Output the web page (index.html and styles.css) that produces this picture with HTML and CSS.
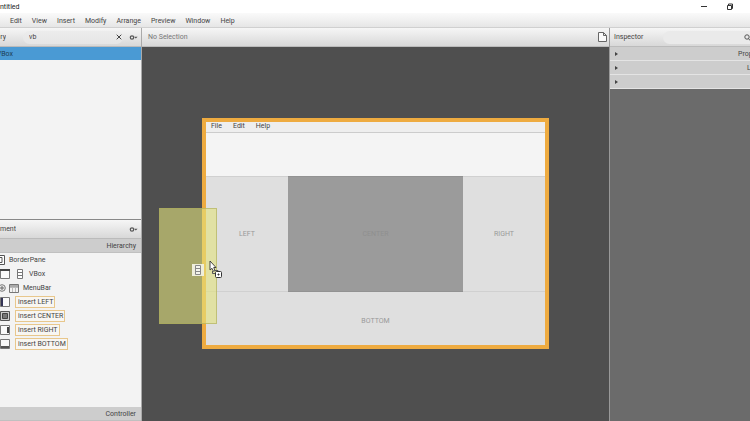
FILE: index.html
```html
<!DOCTYPE html>
<html lang="en">
<head>
<meta charset="utf-8">
<title>Untitled</title>
<link rel="stylesheet" href="styles.css">
</head>
<body>
<div class="app">
  <header class="titlebar">
    <span class="edge-text">ntitled</span>
    <button class="icon-btn minimize" aria-label="Minimize"><svg width="8" height="8" viewBox="0 0 8 8"><path d="M1 3.500h6" stroke="#333" fill="none"/></svg></button>
    <button class="icon-btn" aria-label="Restore"><svg width="8" height="8" viewBox="0 0 8 8"><path d="M1.500 2.500h4v4h-4zM2.500 2.500v-1.500h4v4.500h-1" stroke="#333" fill="none"/></svg></button>
  </header>
  <nav class="menubar">
    <button>Edit</button><button>View</button><button>Insert</button><button>Modify</button><button>Arrange</button><button>Preview</button><button>Window</button><button>Help</button>
  </nav>
  <main class="workspace">
    <aside class="left">
      <section class="library">
        <div class="bar">
          <label class="edge-text lib" for="search">ry</label>
          <div class="search">
            <input id="search" type="text" value="vb">
            <button class="icon-btn" aria-label="Clear"><svg width="6" height="6" viewBox="0 0 6 6"><path d="M.7.7l4.600 4.600M5.300.7L.7 5.300" stroke="#444" fill="none"/></svg></button>
          </div>
          <button class="icon-btn" aria-label="Library options"><svg width="9" height="7" viewBox="0 0 9 7"><circle cx="3" cy="3.500" r="1.700" stroke="#555" stroke-width="1.200" fill="none"/><path d="M5 2.800h3.600L6.800 4.600z" fill="#555"/></svg></button>
        </div>
        <div class="result"><span class="edge-text vbox">VBox</span></div>
      </section>
      <section class="document">
        <div class="bar doc-bar">
          <span class="edge-text">ment</span>
          <button class="icon-btn" aria-label="Document options"><svg width="9" height="7" viewBox="0 0 9 7"><circle cx="3" cy="3.500" r="1.700" stroke="#555" stroke-width="1.200" fill="none"/><path d="M5 2.800h3.600L6.800 4.600z" fill="#555"/></svg></button>
        </div>
        <button class="accordion">Hierarchy</button>
        <ul class="tree">
          <li class="root"><svg width="5" height="10" viewBox="0 0 5 10"><path d="M0 .5h4.500v9H0M0 2.500h2v5H0" fill="#fff" stroke="#555"/></svg>BorderPane</li>
          <li><svg width="10" height="10" viewBox="0 0 10 10"><path d="M.5.5h9v9h-9z" fill="#fafafa" stroke="#777"/><path d="M0 0h10v2H0z" fill="#444"/></svg><svg class="vb-icon" width="6" height="10" viewBox="0 0 6 10"><path d="M.5.5h5v9h-5zM1 3.500h4M1 6.500h4" fill="#fff" stroke="#777"/></svg>VBox</li>
          <li><svg class="plus" width="6" height="8" viewBox="0 0 6 8"><circle cx="2" cy="4" r="3.300" fill="#eee" stroke="#777"/><path d="M0 4h4M2 2v4" stroke="#666"/></svg><svg class="menu-icon" width="10" height="9" viewBox="0 0 10 9"><path d="M1 3.500h8M3.500 4v4M6.500 4v4" stroke="#bbb"/><path d="M.5.5h9v8h-9z" fill="none" stroke="#777"/><path d="M1 1h8v2H1z" fill="#aaa"/></svg>MenuBar</li>
          <li><svg width="10" height="10" viewBox="0 0 10 10"><path d="M.5.5h9v9h-9z" fill="#fafafa" stroke="#777"/><path d="M1 1h2v8H1z" fill="#335"/></svg><span class="slot">insert LEFT</span></li>
          <li><svg width="10" height="10" viewBox="0 0 10 10"><path d="M.5.5h9v9h-9z" fill="#ccc" stroke="#555"/><path d="M2.500 2.500h5v5h-5z" fill="#777" stroke="#444"/></svg><span class="slot">insert CENTER</span></li>
          <li><svg width="10" height="10" viewBox="0 0 10 10"><path d="M.5.5h9v9h-9z" fill="#fafafa" stroke="#777"/><path d="M7 2h2v6H7z" fill="#444"/></svg><span class="slot">insert RIGHT</span></li>
          <li><svg width="10" height="10" viewBox="0 0 10 10"><path d="M.5.5h9v9h-9z" fill="#fafafa" stroke="#777"/><path d="M1 7h8v2H1z" fill="#555"/></svg><span class="slot">insert BOTTOM</span></li>
        </ul>
        <button class="accordion">Controller</button>
      </section>
    </aside>
    <section class="center">
      <div class="bar selection"><span>No Selection</span>
        <svg width="9" height="10" viewBox="0 0 9 10"><path d="M.5.5h5l3 3v6h-8zM5.500.5v3h3" fill="#fafafa" stroke="#666"/></svg>
      </div>
      <div class="canvas">
        <div class="pane">
          <div class="pane-menu"><span>File</span><span>Edit</span><span>Help</span></div>
          <div class="pane-top"></div>
          <div class="pane-mid">
            <div class="zone">LEFT</div><div class="zone core">CENTER</div><div class="zone">RIGHT</div>
          </div>
          <div class="zone bottom">BOTTOM</div>
          <div class="ghost"></div>
          <div class="chip"><svg width="6" height="10" viewBox="0 0 6 10"><path d="M.5.5h5v9h-5zM1 3.500h4M1 6.500h4" fill="#f4f4ec" stroke="#888"/></svg></div>
          <svg class="cursor" width="15" height="20" viewBox="0 0 15 20"><path d="M1 1v9l2-1.700 1.500 3 1.500-.8L4.700 7.500H7z" fill="#fff" stroke="#333" stroke-width=".9"/><path d="M3.500 11v2.500h3.500M6 10.500h3v2" fill="none" stroke="#555"/><rect x="6.500" y="11.500" width="6" height="6" rx="1" fill="#fff" stroke="#333"/><path d="M8.500 14.500h2M9.500 13.500v2" stroke="#333"/></svg>
        </div>
      </div>
    </section>
    <aside class="right">
      <div class="bar inspector"><label for="filter">Inspector</label>
        <div class="filter"><input id="filter" type="text"><svg width="6" height="7" viewBox="0 0 6 7"><circle cx="3" cy="3" r="2.200" fill="none" stroke="#555"/><path d="M4.500 4.500l1.500 2" stroke="#555"/></svg></div>
      </div>
      <button class="fold"><span class="arrow"></span><span class="fold-name">Prop</span></button>
      <button class="fold"><span class="arrow"></span><span class="fold-name short">L</span></button>
      <button class="fold" aria-label="Section"><span class="arrow"></span></button>
    </aside>
  </main>
</div>
</body>
</html>
```
FILE: styles.css
```css
* { box-sizing: border-box; }
body {
  margin: 0;
  font: 7px/10px Roboto, "Open Sans", sans-serif;
  color: #444;
  overflow: hidden;
}
button, input { font: inherit; color: inherit; border: 0; padding: 0; background: none; }
svg { display: block; flex: none; }
.app { display: flex; flex-direction: column; height: 100vh; }
.titlebar { display: flex; align-items: center; gap: 18px; height: 13px; padding-right: 16px; background: #fff; color: #222; }
.edge-text { display: flex; justify-content: flex-end; overflow: hidden; white-space: nowrap; flex: none; }
.minimize { margin-left: auto; }
.menubar {
  display: flex; align-items: center; gap: 10px; height: 15px; padding: 1px 0 0 10px;
  background: linear-gradient(#fafafa, #e6e6e6); border-bottom: 1px solid #d0d0d0;
}
.workspace { display: grid; grid-template-columns: 142px 1fr 141px; flex: 1; min-height: 0; }
.left { display: flex; flex-direction: column; border-right: 1px solid #aaa; background: #f3f3f3; }
.bar {
  display: flex; align-items: center; height: 19px; flex: none;
  background: linear-gradient(#f6f6f6, #d8d8d8); border-bottom: 1px solid #bbb;
}
.left .bar { padding-right: 3px; gap: 6px; }
.lib { width: 6px; }
.search {
  display: flex; align-items: center; flex: 1; min-width: 0; height: 13px; margin-left: 11px;
  padding: 0 1px 0 6px; border-radius: 7px; background: linear-gradient(#ececec, #e6e6e6);
}
.search input { flex: 1; min-width: 0; }
.library { flex: none; height: 191px; }
.result { height: 13px; background: #4a9ad4; color: #1d3c55; display: flex; align-items: center; }
.vbox { width: 13px; }
.document { display: flex; flex-direction: column; flex: 1; min-height: 0; border-top: 1px solid #888; }
.doc-bar { justify-content: space-between; }
.accordion { height: 14px; flex: none; padding: 1px 5px 0 0; text-align: right; background: #cdcdcd; border-bottom: 1px solid #c0c0c0; }
.tree { flex: 1; margin: 0; padding: 0; list-style: none; }
.tree li { display: flex; align-items: center; height: 14px; }
.root svg { margin-right: 4px; }
.vb-icon { margin: 0 6px 0 7px; }
.plus { margin-right: 3px; }
.menu-icon { margin-right: 4px; }
.slot { margin-left: 5px; padding: 0 1px 0 2px; border: 1px solid #e8c78c; background: #f8f6f2; }
.center { display: flex; flex-direction: column; min-width: 0; }
.selection { justify-content: space-between; padding: 0 2px 0 6px; color: #777; }
.canvas { flex: 1; display: flex; align-items: center; padding: 0 60px 2px; background: #4f4f4f; }
.pane { position: relative; flex: 1; border: 4px solid #eeab40; background: #f4f4f4; }
.pane-menu { display: flex; align-items: center; gap: 11px; height: 11px; padding: 0 0 2px 5px; background: #eee; border-bottom: 1px solid #ccc; }
.pane-top { height: 43px; }
.pane-mid { display: grid; grid-template-columns: 82px 1fr 82px; height: 116px; }
.zone { display: flex; align-items: center; justify-content: center; background: #dfdfdf; border: 1px solid #d0d0d0; border-width: 1px 0; color: #999; }
.core { background: #9b9b9b; border-color: #929292; color: #8f8f8f; }
.bottom { height: 53px; padding-top: 5px; border: 0; }
.ghost { position: absolute; left: -47px; top: 86px; width: 58px; height: 116px; background: rgba(226, 226, 125, .6); border: 1px solid rgba(170, 170, 90, .6); }
.chip { position: absolute; left: -14px; top: 142px; padding: 1px 3px; background: #efeedb; }
.cursor { position: absolute; left: 3px; top: 138px; }
.right { background: #6b6b6b; border-left: 1px solid #999; overflow: hidden; }
.inspector { padding-left: 4px; }
.filter {
  display: flex; align-items: center; flex: 1; min-width: 0; height: 13px; margin-left: 20px;
  border-radius: 7px 0 0 7px; background: #eaeaea;
}
.filter input { flex: 1; min-width: 0; }
.fold { display: flex; align-items: center; width: 100%; height: 14px; padding-left: 5px; background: #cdcdcd; border-bottom: 1px solid #e4e4e4; }
.arrow { border: solid transparent; border-width: 2px 0 2px 3px; border-left-color: #444; }
.fold-name { width: 12px; margin-left: auto; text-align: left; white-space: nowrap; }
.short { width: 3px; }
```
